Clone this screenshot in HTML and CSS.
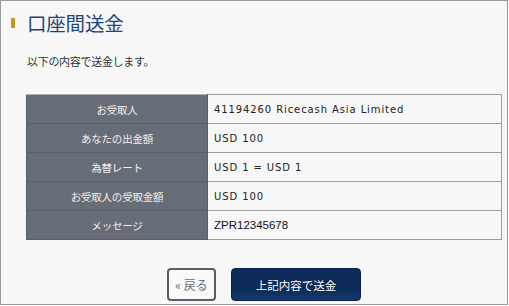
FILE: index.html
```html
<!DOCTYPE html>
<html lang="ja">
<head>
<meta charset="utf-8">
<link rel="stylesheet" href="styles.css">
</head>
<body>
<div class="frame">
  <div class="header">
    <span class="mark"></span>
    <h1 class="title">口座間送金</h1>
  </div>
  <p class="lead">以下の内容で送金します。</p>
  <table class="confirm">
    <tr><th>お受取人</th><td>41194260 Ricecash Asia Limited</td></tr>
    <tr><th>あなたの出金額</th><td>USD 100</td></tr>
    <tr><th>為替レート</th><td>USD 1 = USD 1</td></tr>
    <tr><th>お受取人の受取金額</th><td>USD 100</td></tr>
    <tr><th>メッセージ</th><td class="msg">ZPR12345678</td></tr>
  </table>
  <div class="actions">
    <button class="btn-back">« 戻る</button>
    <button class="btn-send">上記内容で送金</button>
  </div>
</div>
</body>
</html>
```
FILE: styles.css
```css
html, body {
  margin: 0;
  padding: 0;
  background: #ffffff;
}
body {
  font-family: "Noto Sans CJK JP", "Noto Sans", sans-serif;
}
.frame {
  box-sizing: border-box;
  width: 508px;
  height: 305px;
  border: 1px solid #9a9a9a;
  background: #f7f7f7;
  padding: 0 0 0 25px;
}
.header {
  display: flex;
  align-items: center;
  height: 26px;
  margin-top: 9px;
  margin-left: -15px;
}
.mark {
  width: 4px;
  height: 10px;
  background: #c49a1c;
  margin-right: 12px;
}
.title {
  margin: 0;
  font-size: 19.5px;
  font-weight: normal;
  color: #1d4677;
  line-height: 26px;
  letter-spacing: -0.2px;
}
.lead {
  margin: 17px 0 0 1px;
  font-size: 11px;
  line-height: 16px;
  color: #333333;
  letter-spacing: -0.3px;
}
.confirm {
  margin-top: 25px;
  border-collapse: collapse;
  width: 476px;
}
.confirm th {
  width: 180px;
  height: 28px;
  padding: 0;
  background: #676d76;
  color: #f0f0f0;
  font-weight: normal;
  font-size: 10.5px;
  text-align: center;
  border: 1px solid #5a6068;
  border-top-color: #b0b0b0;
  letter-spacing: -0.2px;
}
.confirm tr + tr th {
  border-top-color: #555b63;
}
.confirm td {
  height: 28px;
  padding: 0 0 0 6px;
  background: #f7f7f7;
  border: 1px solid #9c9c9c;
  font-family: "DejaVu Sans", sans-serif;
  font-size: 10px;
  letter-spacing: 0.9px;
  color: #222222;
}
.confirm td.msg {
  font-family: "Liberation Sans", Arial, sans-serif;
  font-size: 11.5px;
  letter-spacing: 0;
  color: #111111;
}
.actions {
  width: 476px;
  margin-top: 28px;
  display: flex;
  justify-content: center;
  gap: 15px;
}
.actions button {
  font-family: "Noto Sans CJK JP", "Noto Sans", sans-serif;
  height: 33px;
  border-radius: 4px;
  padding: 0;
  cursor: pointer;
}
.btn-back {
  width: 49px;
  background: #f9f9f9;
  border: 2px solid #5c5c5c;
  color: #6e6e6e;
  font-size: 12px;
}
.btn-send {
  width: 130px;
  height: 32px;
  background: linear-gradient(#0c2a5a, #0b2a58 60%, #14386c);
  border: 1px solid #0a2249;
  color: #ffffff;
  font-size: 11.5px;
}
```
